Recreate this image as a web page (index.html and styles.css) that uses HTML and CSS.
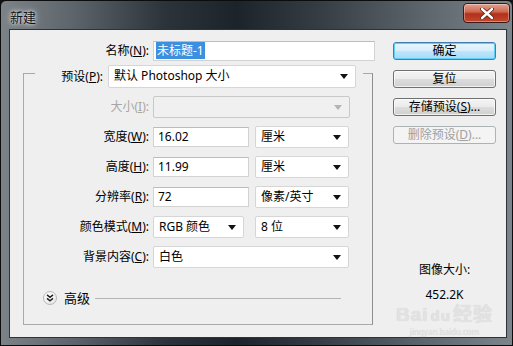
FILE: index.html
```html
<!DOCTYPE html>
<html lang="zh-CN">
<head>
    <meta charset="UTF-8">
    <title>新建</title>
    <link rel="stylesheet" href="styles.css">
</head>
<body>
    <div class="window">
        <div class="titlebar">
            <span class="title">新建</span>
            <button class="close">
                <svg width="14" height="11" viewBox="0 0 14 11">
                    <path d="M2 1 L12 10 M12 1 L2 10" stroke="#5a1a10" stroke-width="4" stroke-linecap="round"/>
                    <path d="M2 1 L12 10 M12 1 L2 10" stroke="#fff" stroke-width="2.4" stroke-linecap="round"/>
                </svg>
            </button>
        </div>
        <div class="client">
            <div class="left">
                <div class="row name-row">
                    <label class="lbl">名称(<u>N</u>):</label>
                    <div class="input name-input"><span class="selected">未标题-1</span></div>
                </div>
                <div class="group">
                    <div class="row preset-row">
                        <label class="lbl">预设(<u>P</u>):</label>
                        <div class="select preset">默认 Photoshop 大小<i class="arrow"></i></div>
                    </div>
                    <div class="row">
                        <label class="lbl off">大小(<u>I</u>):</label>
                        <div class="select size-sel disabled"><i class="arrow"></i></div>
                    </div>
                    <div class="row">
                        <label class="lbl">宽度(<u>W</u>):</label>
                        <div class="input num">16.02</div>
                        <div class="select unit">厘米<i class="arrow"></i></div>
                    </div>
                    <div class="row">
                        <label class="lbl">高度(<u>H</u>):</label>
                        <div class="input num">11.99</div>
                        <div class="select unit">厘米<i class="arrow"></i></div>
                    </div>
                    <div class="row">
                        <label class="lbl">分辨率(<u>R</u>):</label>
                        <div class="input num">72</div>
                        <div class="select unit">像素/英寸<i class="arrow"></i></div>
                    </div>
                    <div class="row">
                        <label class="lbl">颜色模式(<u>M</u>):</label>
                        <div class="select mode">RGB 颜色<i class="arrow"></i></div>
                        <div class="select unit bits">8 位<i class="arrow"></i></div>
                    </div>
                    <div class="row">
                        <label class="lbl">背景内容(<u>C</u>):</label>
                        <div class="select bg-sel">白色<i class="arrow"></i></div>
                    </div>
                    <div class="advanced">
                        <span class="adv-btn">
                            <svg width="8" height="8" viewBox="0 0 8 8">
                                <path d="M1 0.8 L4 3.3 L7 0.8 M1 4.3 L4 6.8 L7 4.3" fill="none" stroke="#222" stroke-width="1.5"/>
                            </svg>
                        </span>
                        <span class="adv-text">高级</span>
                        <span class="adv-line"></span>
                    </div>
                </div>
            </div>
            <div class="right">
                <button class="btn default">确定</button>
                <button class="btn">复位</button>
                <button class="btn">存储预设(<u>S</u>)...</button>
                <button class="btn disabled">删除预设(<u>D</u>)...</button>
                <div class="info">
                    <div>图像大小:</div>
                    <div>452.2K</div>
                </div>
                <div class="watermark">
                    <div class="wm-logo">Bai<span class="wm-du">du</span>经验</div>
                    <div class="wm-url">jingyan.baidu.com</div>
                </div>
            </div>
        </div>
    </div>
</body>
</html>
```

FILE: styles.css
```css
* {
    box-sizing: border-box;
}

body {
    margin: 0;
    background: #111;
    font-family: "Noto Sans", "Noto Sans CJK SC", sans-serif;
    font-size: 12px;
    color: #000;
}

.window {
    width: 513px;
    height: 346px;
    padding: 0 5px 7px 8px;
    border-radius: 6px 6px 0 0;
    border: 1px solid #0c0c0c;
    background:
        linear-gradient(90deg, #7c8388 0%, #5d646b 14%, #2c333b 32%, #1d232a 46%, #353c44 62%, #5b636b 82%, #7d858c 100%);
    display: flex;
    flex-direction: column;
}

.titlebar {
    height: 30px;
    display: flex;
    justify-content: space-between;
    align-items: flex-start;
    margin-right: -3px;
}

.title {
    padding: 7px 0 0 1px;
    font-size: 13px;
    line-height: 18px;
    color: #111;
    text-shadow: 0 0 6px rgba(255, 255, 255, 0.9), 0 0 3px rgba(255, 255, 255, 0.8);
}

.close {
    margin-top: 2px;
    width: 47px;
    height: 20px;
    padding: 0;
    border: 1px solid #3c1a14;
    border-radius: 4px;
    background: linear-gradient(180deg, #e4a292 0%, #cf6a52 42%, #b2311a 55%, #c2482e 100%);
    box-shadow: inset 0 0 0 1px rgba(255, 255, 255, 0.35);
    display: flex;
    align-items: center;
    justify-content: center;
}

.client {
    flex: 1;
    display: flex;
    border: 1px solid #2e3338;
    background: #efefef;
    padding: 11px 10px 0 13px;
}

.left {
    width: 352px;
    display: flex;
    flex-direction: column;
}

.row {
    display: flex;
    align-items: center;
    height: 22px;
    line-height: 16px;
}

.lbl {
    width: 125px;
    margin-right: 4px;
    text-align: right;
    white-space: nowrap;
}

.lbl.off {
    color: #a6a6a6;
}

.name-row {
    height: 20px;
}

.name-row .lbl {
    width: 126px;
}

.input {
    height: 20px;
    background: #fff;
    border: 1px solid #d2d2d2;
    border-top-color: #bcbcbc;
    padding: 1px 0 0 4px;
    white-space: nowrap;
}

.name-input {
    width: 222px;
    padding-left: 2px;
}

.selected {
    background: #3d8fe0;
    color: #fff;
    padding: 0 1px;
}

.num {
    width: 96px;
}

.select {
    position: relative;
    height: 22px;
    background: #fff;
    border: 1px solid #d6d6d6;
    border-radius: 2px;
    padding: 2px 0 0 5px;
    white-space: nowrap;
}

.select .arrow {
    position: absolute;
    right: 7px;
    top: 8px;
    width: 0;
    height: 0;
    border-left: 4px solid transparent;
    border-right: 4px solid transparent;
    border-top: 5px solid #111;
}

.select.disabled {
    background: #f0f0f0;
    border-color: #c9c9c9;
}

.select.disabled .arrow {
    border-top-color: #b4b4b4;
}

.unit {
    width: 94px;
    margin-left: 6px;
}

.size-sel {
    width: 197px;
}

.mode {
    width: 91px;
}

.bits {
    margin-left: 11px;
}

.bg-sel {
    width: 196px;
}

.group {
    width: 350px;
    margin-top: 12px;
    border: 1px solid #a9a9a9;
    border-right-color: #8e8e8e;
    padding-bottom: 18px;
    display: flex;
    flex-direction: column;
    gap: 8px;
}

.preset-row {
    height: 23px;
    margin: -9px 9px 0 11px;
    padding: 0 7px;
    background: #efefef;
}

.preset-row .lbl {
    width: 61px;
    margin-right: 5px;
}

.preset {
    width: 248px;
    height: 23px;
}

.advanced {
    display: flex;
    align-items: center;
    height: 16px;
    margin: 14px 31px 0 19px;
}

.adv-btn {
    width: 14px;
    height: 14px;
    border-radius: 50%;
    border: 1px solid #b8b8b8;
    background: radial-gradient(circle at 40% 35%, #ffffff 0%, #f2f2f2 55%, #d4d4d4 100%);
    display: flex;
    align-items: center;
    justify-content: center;
}

.adv-text {
    margin-left: 7px;
    font-size: 13px;
    line-height: 16px;
}

.adv-line {
    flex: 1;
    margin-left: 5px;
    height: 1px;
    background: #b4b4b4;
}

.right {
    width: 105px;
    margin-left: 18px;
    padding-top: 1px;
    display: flex;
    flex-direction: column;
    gap: 10px;
}

.btn {
    height: 18px;
    padding: 0;
    font-family: inherit;
    font-size: 12px;
    line-height: 14px;
    color: #000;
    border: 1px solid #707070;
    border-radius: 3px;
    background: linear-gradient(180deg, #f4f4f4 0%, #ebebeb 48%, #dcdcdc 52%, #d0d0d0 100%);
    box-shadow: inset 0 0 0 1px rgba(255, 255, 255, 0.7);
}

.btn.default {
    border-color: #3c7fb1;
    background: linear-gradient(180deg, #e8f6fd 0%, #d6eefb 48%, #bee6fd 52%, #a7d9f5 100%);
    box-shadow: inset 0 0 0 1px #5fd0f8;
}

.btn.disabled {
    color: #a0a0a0;
    border-color: #adb2b5;
    background: #f4f4f4;
    box-shadow: none;
}

.info {
    margin-top: 103px;
    text-align: center;
    line-height: 25px;
    font-size: 12px;
}

.watermark {
    margin-top: -12px;
    text-align: center;
    color: #e2e2e2;
    text-shadow: 0 0 1px #cfcfcf;
}

.wm-logo {
    font-family: "Liberation Sans", "Noto Sans CJK SC", sans-serif;
    font-size: 19px;
    font-weight: bold;
    line-height: 20px;
    letter-spacing: 1px;
}

.wm-du {
    font-size: 15px;
    margin: 0 2px;
}

.wm-url {
    font-size: 8px;
    line-height: 10px;
    margin-top: 1px;
}
```
